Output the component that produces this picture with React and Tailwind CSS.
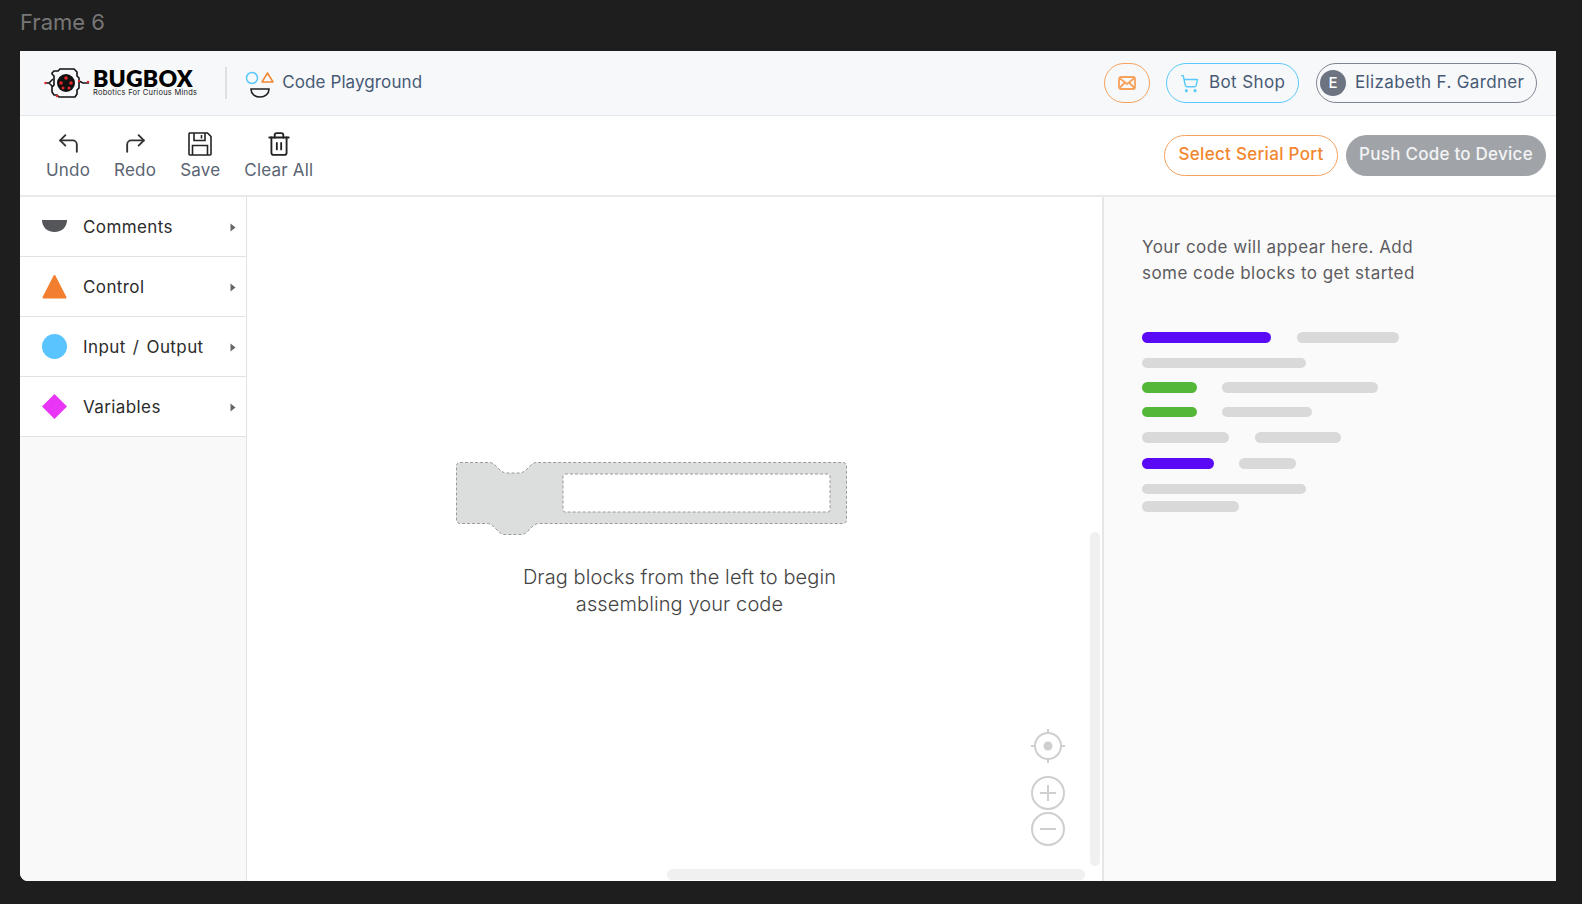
import React from 'react';
import { CornerUpLeft, CornerUpRight, Trash2, ShoppingCart } from 'lucide-react';

const BugLogo = () => (
  <svg width="46" height="32" viewBox="0 0 46 32" fill="none">
    <path d="M10 4h4l2-2h14l3 3v4l2 2v10l-2 2v4l-2 3H15l-2-2h-3l-2-3v-5l2-2v-9l-2-2V6z" stroke="#111" strokeWidth="1.6" />
    <path d="M1 16h4l4-4M9 20l-4-4M35 14l4 2h6" stroke="#111" strokeWidth="1.5" />
    <circle cx="22" cy="16" r="9" fill="#111" />
    <circle cx="22" cy="11" r="1.8" fill="#e3272b" />
    <circle cx="17" cy="16" r="1.8" fill="#e3272b" />
    <circle cx="27" cy="16" r="1.8" fill="#e3272b" />
    <circle cx="19" cy="21" r="1.5" fill="#e3272b" />
    <circle cx="25" cy="21" r="1.5" fill="#e3272b" />
    <circle cx="1.5" cy="16" r="1.3" fill="#e3272b" />
    <circle cx="44" cy="15" r="1.3" fill="#e3272b" />
    <circle cx="13" cy="29" r="1.3" fill="#e3272b" />
    <circle cx="35" cy="14" r="1.2" fill="#e3272b" />
  </svg>
);

const PlaygroundIcon = () => (
  <svg width="30" height="28" viewBox="0 0 30 28" fill="none">
    <circle cx="7" cy="7" r="5.5" stroke="#5ac8fa" strokeWidth="1.5" />
    <path d="M22.5 2 L28 11 H17 Z" stroke="#f2872f" strokeWidth="1.5" strokeLinejoin="round" />
    <path d="M6 18 H24 C24 23 20 26 15 26 C10 26 6 23 6 18 Z" stroke="#222" strokeWidth="1.6" />
  </svg>
);

const MailIcon = () => (
  <svg width="18" height="14" viewBox="0 0 18 14" fill="none" stroke="#f5a25d" strokeWidth="1.8">
    <rect x="1" y="1" width="16" height="12" rx="2" />
    <path d="M1.500 2l7.500 6 7.500-6M1.500 12l5.500-5.500M16.500 12l-5.500-5.500" />
  </svg>
);

const SaveIcon = () => (
  <svg width="24" height="24" viewBox="0 0 24 24" fill="none" stroke="#222" strokeWidth="1.6">
    <path d="M1.500 1h18l3.500 3.500V22a1 1 0 0 1-1 1H2a1 1 0 0 1-1-1V2z" />
    <path d="M6 1v7.500h11V1M13.500 3v3.500" />
    <path d="M4.500 23V13.500h15V23" />
  </svg>
);

const Caret = () => (
  <svg width="6" height="9" viewBox="0 0 6 9" className="ml-auto mt-[2px]">
    <path d="M0.500 0.500L5.500 4.500L0.500 8.500Z" fill="#666" />
  </svg>
);

const categories = [
  {
    name: 'Comments',
    icon: (
      <svg width="25" height="25" viewBox="0 0 25 25">
        <path d="M0 6H25C25 13 20 18 12.500 18C5 18 0 13 0 6Z" fill="#55565a" />
      </svg>
    ),
  },
  {
    name: 'Control',
    icon: (
      <svg width="25" height="25" viewBox="0 0 25 25">
        <path d="M12.500 2L23.500 23.500H1.500Z" fill="#f27f2f" stroke="#f27f2f" strokeWidth="2" strokeLinejoin="round" />
      </svg>
    ),
  },
  {
    name: 'Input / Output',
    icon: (
      <svg width="25" height="25" viewBox="0 0 25 25">
        <circle cx="12.500" cy="12.500" r="12.500" fill="#5ac4ff" />
      </svg>
    ),
  },
  {
    name: 'Variables',
    icon: (
      <svg width="25" height="25" viewBox="0 0 25 25">
        <path d="M12.500 0L25 12.500L12.500 25L0 12.500Z" fill="#e935f5" />
      </svg>
    ),
  },
];

const toolbarItems = [
  { label: 'Undo', icon: <CornerUpLeft size={25} strokeWidth={1.8} color="#333" /> },
  { label: 'Redo', icon: <CornerUpRight size={25} strokeWidth={1.8} color="#333" /> },
  { label: 'Save', icon: <SaveIcon /> },
  { label: 'Clear All', icon: <Trash2 size={26} strokeWidth={1.7} color="#222" /> },
];

// code preview placeholder lines
const skeleton = [
  { cls: 'mt-0 gap-[26px]', bars: ['w-[129px] h-[11px] bg-[#5a0af5]', 'w-[102px] h-[11px] bg-[#d9d9d9]'] },
  { cls: 'mt-[15px]', bars: ['w-[164px] h-[10px] bg-[#d9d9d9]'] },
  { cls: 'mt-[14px] gap-[25px]', bars: ['w-[55px] h-[11px] bg-[#55b737]', 'w-[156px] h-[11px] bg-[#d9d9d9]'] },
  { cls: 'mt-[14px] gap-[25px]', bars: ['w-[55px] h-[10px] bg-[#55b737]', 'w-[90px] h-[10px] bg-[#d9d9d9]'] },
  { cls: 'mt-[15px] gap-[26px]', bars: ['w-[87px] h-[11px] bg-[#d9d9d9]', 'w-[86px] h-[11px] bg-[#d9d9d9]'] },
  { cls: 'mt-[15px] gap-[25px]', bars: ['w-[72px] h-[11px] bg-[#5a0af5]', 'w-[57px] h-[11px] bg-[#d9d9d9]'] },
  { cls: 'mt-[15px]', bars: ['w-[164px] h-[10px] bg-[#d9d9d9]'] },
  { cls: 'mt-[7px]', bars: ['w-[97px] h-[11px] bg-[#d9d9d9]'] },
];

const App = () => {
  return (
    <div className="h-screen overflow-hidden bg-[#1e1e1e] pl-[20px] pr-[26px] font-['Inter',sans-serif]">
      <div className="h-[51px] pt-[8px] text-[22px] leading-[28px] text-[#777]">Frame 6</div>

      <div className="relative flex h-[830px] flex-col overflow-hidden rounded-bl-[8px] bg-white">
        {/* Top header */}
        <header className="flex h-[65px] shrink-0 items-center border-b border-[#e3e6ec] bg-[#f7f8fa] pl-[24px] pr-[19px]">
          <BugLogo />
          <div className="-mt-[2px] ml-[3px] flex flex-col">
            <span className="font-['Lato',sans-serif] text-[23px] font-extrabold leading-[20px] tracking-[0.2px] text-black">BUGBOX</span>
            <span className="mt-[1px] text-[7.500px] leading-[8px] tracking-[0.25px] text-[#222]">Robotics For Curious Minds</span>
          </div>
          <div className="ml-[28px] h-[32px] w-[2px] bg-[#dde1e6]" />
          <div className="ml-[18px] mt-[4px]"><PlaygroundIcon /></div>
          <span className="ml-[7px] text-[17px] tracking-[0.1px] text-[#475a75]">Code Playground</span>

          <div className="ml-auto flex items-center">
            <button className="flex h-[40px] w-[46px] items-center justify-center rounded-full border-[1.5px] border-[#f5a25d]">
              <MailIcon />
            </button>
            <button className="ml-[16px] flex h-[40px] w-[133px] items-center rounded-full border-[1.5px] border-[#5ac8fa] pl-[13px]">
              <ShoppingCart size={19} strokeWidth={1.8} color="#5ac8fa" />
              <span className="ml-[10px] text-[17px] tracking-[0.4px] text-[#475a75]">Bot Shop</span>
            </button>
            <button className="ml-[17px] flex h-[40px] w-[221px] items-center rounded-full border-[1.5px] border-[#7d8590] pl-[3px]">
              <span className="flex h-[26px] w-[26px] items-center justify-center rounded-full bg-[#6b7480] text-[15px] font-medium text-white">E</span>
              <span className="ml-[9px] text-[17px] tracking-[0.35px] text-[#475a75]">Elizabeth F. Gardner</span>
            </button>
          </div>
        </header>

        {/* Toolbar */}
        <div className="flex h-[81px] shrink-0 items-center border-b-2 border-[#e8e9ed] pl-[26px] pr-[10px]">
          <div className="flex gap-[24px] pb-[2px]">
            {toolbarItems.map((item) => (
              <button key={item.label} className="flex flex-col items-center">
                <span className="mt-[2px] flex h-[28px] items-center">{item.icon}</span>
                <span className="text-[17px] leading-[24px] tracking-[0.2px] text-[#5a6472]">{item.label}</span>
              </button>
            ))}
          </div>
          <div className="ml-auto flex gap-[8px]">
            <button className="h-[41px] w-[174px] rounded-full border-[1.5px] border-[#f5a25d] pb-[1px] text-[17px] font-medium tracking-[0.3px] text-[#f2872f]">
              Select Serial Port
            </button>
            <button className="h-[41px] w-[200px] rounded-full bg-[#a0a4a8] pb-[1px] text-[17px] font-medium tracking-[0.25px] text-[#f3f4f5]">
              Push Code to Device
            </button>
          </div>
        </div>

        <div className="flex min-h-0 flex-1">
          {/* Block categories */}
          <aside className="w-[227px] shrink-0 border-r border-[#e2e2e2] bg-[#f9f9f9]">
            {categories.map((cat) => (
              <div key={cat.name} className="flex h-[60px] items-center border-b border-[#e2e2e2] bg-white pl-[22px] pr-[10px]">
                {cat.icon}
                <span className="ml-[16px] mt-[2px] text-[17px] tracking-[0.4px] text-[#2b2b2b] [word-spacing:2px]">{cat.name}</span>
                <Caret />
              </div>
            ))}
          </aside>

          {/* Canvas */}
          <main className="relative flex-1 pt-[264px]">
            <div className="pl-[208px]">
              <svg width="393" height="76" viewBox="0 0 393 76" fill="none">
                <path
                  d="M5 1.500H34C38 1.500 40 4 43 7C46 10 48 12 52 12H64C68 12 70 10 73 7C76 4 78 1.500 82 1.500H388C390 1.500 391.500 3 391.500 5V59C391.500 61 390 62.500 388 62.500H84C80 62.500 78 65 75 68C72 71 70 73.500 66 73.500H50C46 73.500 44 71 41 68C38 65 36 62.500 32 62.500H5C3 62.500 1.500 61 1.500 59V5C1.500 3 3 1.500 5 1.500Z"
                  fill="#dcdddd"
                  stroke="#9a9a9a"
                  strokeDasharray="3 2"
                />
                <rect x="108" y="13" width="267" height="38" rx="2" fill="#fff" stroke="#9a9a9a" strokeDasharray="3 2" />
              </svg>
            </div>
            <p className="mt-[27px] pl-[10px] text-center text-[20px] font-light leading-[27px] tracking-[0.1px] text-[#444]">
              Drag blocks from the left to begin
              <br />
              assembling your code
            </p>

            {/* Zoom controls */}
            <div className="absolute right-[37px] top-[531px] flex flex-col items-center">
              <svg width="34" height="36" viewBox="0 0 34 36" fill="none" stroke="#cfcfcf" strokeWidth="2">
                <circle cx="17" cy="18" r="13" />
                <path d="M17 1v5M17 30v5M0 18h5M29 18h5" />
                <circle cx="17" cy="18" r="4.500" fill="#cfcfcf" stroke="none" />
              </svg>
              <svg className="mt-[12px]" width="34" height="34" viewBox="0 0 34 34" fill="none" stroke="#cfcfcf" strokeWidth="2">
                <circle cx="17" cy="17" r="16" />
                <path d="M17 9v16M9 17h16" />
              </svg>
              <svg className="mt-[2px]" width="34" height="34" viewBox="0 0 34 34" fill="none" stroke="#cfcfcf" strokeWidth="2">
                <circle cx="17" cy="17" r="16" />
                <path d="M9 17h16" />
              </svg>
            </div>

            {/* Scrollbars */}
            <div className="absolute right-[2px] top-[335px] h-[334px] w-[10px] rounded-full bg-[#f0f0f0]" />
            <div className="absolute bottom-[1px] left-[420px] h-[11px] w-[418px] rounded-full bg-[#f0f0f0]" />
          </main>

          {/* Code preview */}
          <section className="w-[454px] shrink-0 border-l-2 border-[#e6e6e6] bg-[#fafafa] pl-[38px] pt-[37px]">
            <p className="text-[17px] leading-[26px] tracking-[0.45px] text-[#5c5c60]">
              Your code will appear here. Add
              <br />
              some code blocks to get started
            </p>
            <div className="mt-[46px]">
              {skeleton.map((row, i) => (
                <div key={i} className={`flex ${row.cls}`}>
                  {row.bars.map((bar, j) => (
                    <div key={j} className={`rounded-full ${bar}`} />
                  ))}
                </div>
              ))}
            </div>
          </section>
        </div>
      </div>
    </div>
  );
};

export default App;
